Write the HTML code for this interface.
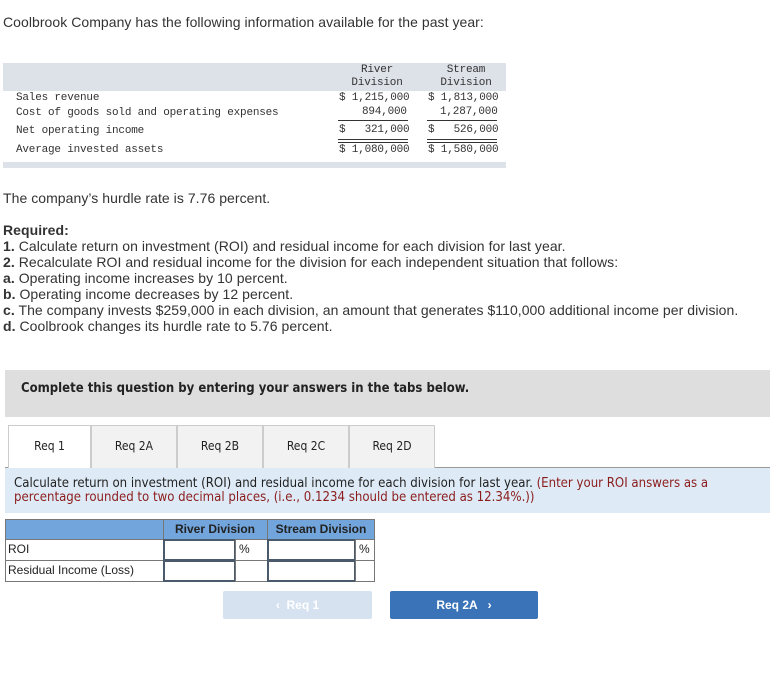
<!DOCTYPE html>
<html><head><meta charset="utf-8"><style>
body{margin:0;width:770px;height:690px;background:#fff;position:relative;font-family:"Liberation Sans",sans-serif;color:#333;overflow:hidden}
.a{position:absolute;white-space:nowrap}
.t{font-size:14px;letter-spacing:0.05px;line-height:16px}
.m{font-family:"Liberation Mono",monospace;font-size:11px;line-height:13px;color:#333;letter-spacing:-0.2px}
.tab{position:absolute;top:425px;height:42px;border:1px solid #ccc;border-bottom:none;background:#f2f2f2;font-family:"DejaVu Sans Condensed","Liberation Sans",sans-serif;font-size:12px;text-align:center;line-height:40px;color:#222}
.v{font-family:"DejaVu Sans Condensed","Liberation Sans",sans-serif}
.c{position:absolute;box-sizing:border-box;font-size:12px;color:#222;line-height:19px}
</style></head><body>
<div class="a t" style="left:3px;top:14px">Coolbrook Company has the following information available for the past year:</div>

<div class="a" style="left:3px;top:63px;width:503px;height:28px;background:#dde1e8"></div>
<div class="a" style="left:3px;top:162px;width:503px;height:6px;background:#dde1e8"></div>
<div class="a m" style="left:351px;top:64px;text-align:center;width:52px">River<br>Division</div>
<div class="a m" style="left:438px;top:64px;text-align:center;width:56px">Stream<br>Division</div>
<div class="a m" style="left:16px;top:92px">Sales revenue</div>
<div class="a m" style="left:16px;top:107px">Cost of goods sold and operating expenses</div>
<div class="a m" style="left:16px;top:125px">Net operating income</div>
<div class="a m" style="left:16px;top:144px">Average invested assets</div>
<div class="a m" style="left:339px;top:92px">$ 1,215,000</div>
<div class="a m" style="left:428px;top:92px">$ 1,813,000</div>
<div class="a m" style="left:362px;top:106px">894,000</div>
<div class="a m" style="left:440px;top:106px">1,287,000</div>
<div class="a" style="left:338px;top:120px;width:70px;height:1px;background:#333"></div>
<div class="a" style="left:427px;top:120px;width:70px;height:1px;background:#333"></div>
<div class="a m" style="left:339px;top:124px">$&nbsp;&nbsp;&nbsp;321,000</div>
<div class="a m" style="left:428px;top:124px">$&nbsp;&nbsp;&nbsp;526,000</div>
<div class="a" style="left:338px;top:139px;width:70px;height:2px;border-top:1px solid #333;border-bottom:1px solid #333"></div>
<div class="a" style="left:427px;top:139px;width:70px;height:2px;border-top:1px solid #333;border-bottom:1px solid #333"></div>
<div class="a m" style="left:339px;top:144px">$ 1,080,000</div>
<div class="a m" style="left:428px;top:144px">$ 1,580,000</div>

<div class="a t" style="left:3px;top:190px">The company’s hurdle rate is 7.76 percent.</div>
<div class="a t" style="left:3px;top:222px"><b>Required:</b></div>
<div class="a t" style="left:3px;top:238px"><b>1.</b> Calculate return on investment (ROI) and residual income for each division for last year.</div>
<div class="a t" style="left:3px;top:254px"><b>2.</b> Recalculate ROI and residual income for the division for each independent situation that follows:</div>
<div class="a t" style="left:3px;top:270px"><b>a.</b> Operating income increases by 10 percent.</div>
<div class="a t" style="left:3px;top:286px"><b>b.</b> Operating income decreases by 12 percent.</div>
<div class="a t" style="left:3px;top:302px"><b>c.</b> The company invests $259,000 in each division, an amount that generates $110,000 additional income per division.</div>
<div class="a t" style="left:3px;top:318px"><b>d.</b> Coolbrook changes its hurdle rate to 5.76 percent.</div>

<div class="a" style="left:5px;top:370px;width:765px;height:47px;background:#dedede"></div>
<div class="a v" style="left:21px;top:381px;font-size:13px;font-weight:bold;color:#222">Complete this question by entering your answers in the tabs below.</div>

<div class="a" style="left:5px;top:467px;width:765px;height:1px;background:#999"></div>
<div class="tab" style="left:8px;width:81px;background:#fff;height:43px">Req 1</div>
<div class="tab" style="left:91px;width:84px">Req 2A</div>
<div class="tab" style="left:177px;width:84px">Req 2B</div>
<div class="tab" style="left:263px;width:84px">Req 2C</div>
<div class="tab" style="left:349px;width:84px">Req 2D</div>

<div class="a" style="left:5px;top:468px;width:765px;height:45px;background:#deebf6"></div>
<div class="a v" style="left:14px;top:477px;font-size:13.1px;line-height:14px;color:#222">Calculate return on investment (ROI) and residual income for each division for last year. <span style="color:#8b1c1c">(Enter your ROI answers as a<br>percentage rounded to two decimal places, (i.e., 0.1234 should be entered as 12.34%.))</span></div>

<div class="c" style="left:5px;top:519px;width:370px;height:21px;background:#72a5dc;border:1px solid #777"></div>
<div class="c" style="left:163px;top:519px;width:1px;height:21px;background:#777"></div>
<div class="c" style="left:267px;top:519px;width:1px;height:21px;background:#777"></div>
<div class="c" style="left:163px;top:520px;width:104px;text-align:center;font-weight:bold">River Division</div>
<div class="c" style="left:267px;top:520px;width:108px;text-align:center;font-weight:bold">Stream Division</div>
<div class="c" style="left:5px;top:539px;width:159px;height:22px;border:1px solid #777;padding-left:2px">ROI</div>
<div class="c" style="left:5px;top:560px;width:159px;height:22px;border:1px solid #777;padding-left:2px">Residual Income (Loss)</div>
<div class="c" style="left:163px;top:539px;width:73px;height:22px;border:2px solid #4a5a6a"></div>
<div class="c" style="left:163px;top:560px;width:73px;height:22px;border:2px solid #4a5a6a"></div>
<div class="c" style="left:235px;top:539px;width:33px;height:22px;border:1px solid #777;padding-left:3px">%</div>
<div class="c" style="left:235px;top:560px;width:33px;height:22px;border:1px solid #777"></div>
<div class="c" style="left:267px;top:539px;width:89px;height:22px;border:2px solid #4a5a6a"></div>
<div class="c" style="left:267px;top:560px;width:89px;height:22px;border:2px solid #4a5a6a"></div>
<div class="c" style="left:355px;top:539px;width:20px;height:22px;border:1px solid #777;padding-left:3px">%</div>
<div class="c" style="left:355px;top:560px;width:20px;height:22px;border:1px solid #777"></div>

<div class="a" style="left:223px;top:591px;width:149px;height:28px;background:#d6e2f0;border-radius:2px;color:#fff;font-weight:bold;font-size:12px;text-align:center;line-height:28px">‹&nbsp;&nbsp;Req 1</div>
<div class="a" style="left:390px;top:591px;width:148px;height:28px;background:#3a73b8;border-radius:2px;color:#fff;font-weight:bold;font-size:12px;text-align:center;line-height:28px">Req 2A&nbsp;&nbsp;&nbsp;›</div>
</body></html>
